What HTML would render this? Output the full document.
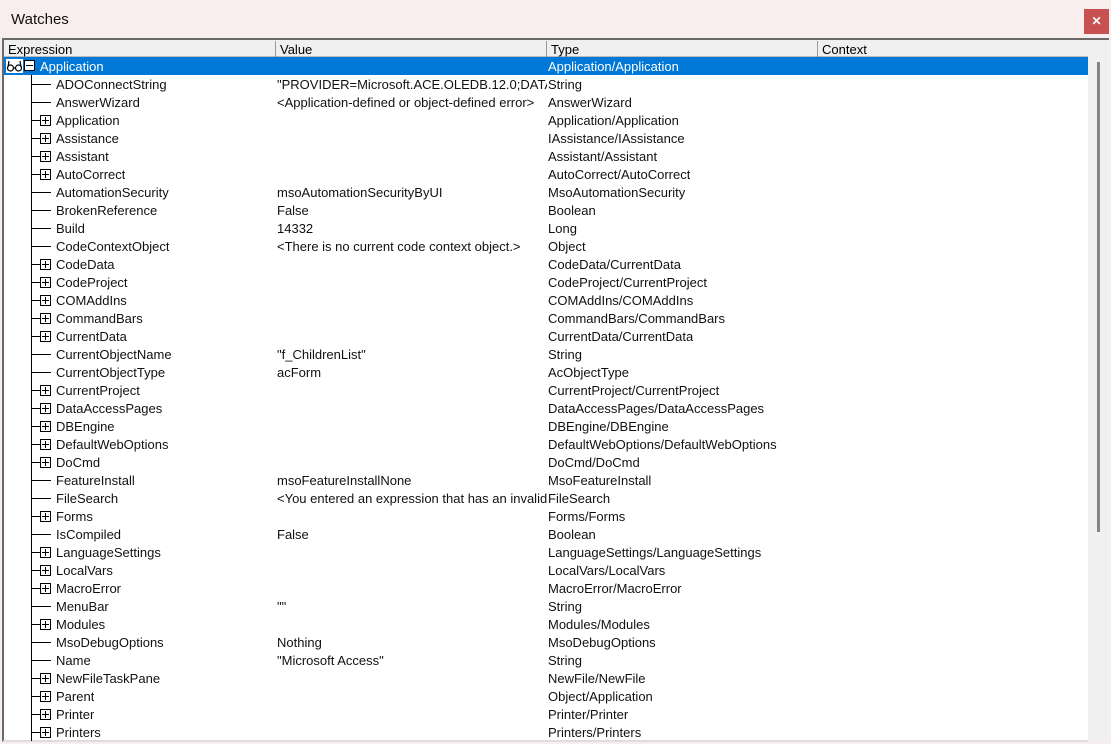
<!DOCTYPE html>
<html><head><style>
*{margin:0;padding:0;box-sizing:border-box}
body{width:1111px;height:744px;overflow:hidden;background:#f9eeee;font-family:"Liberation Sans",sans-serif;font-size:13px;position:relative}
.title{position:absolute;left:11px;top:11px;font-size:15px;color:#111}
.close{position:absolute;left:1084px;top:9px;width:25px;height:25px;background:#c75050;color:#fff;font-size:12px;text-align:center;line-height:25px;font-weight:bold}
.win{position:absolute;left:2px;top:38px;width:1107px;height:704px;background:#fff;border-left:2px solid #6a6a6a;border-top:2px solid #6a6a6a;border-bottom:2px solid #ddd}
.hdr{position:absolute;left:0;top:0;width:1084px;height:17px;background:#f0f0f0;border-bottom:1px solid #bbb}
.hdr div{position:absolute;top:1px;padding-left:4px;border-left:1px solid #999;height:16px;line-height:17px;color:#000}
.sb{position:absolute;left:1084px;top:0;width:21px;height:702px;background:#f0f0f0}
.thumb{position:absolute;left:9px;top:22px;width:3px;height:470px;background:#858585}
.rows{position:absolute;left:0;top:17px;width:1084px}
.r{position:relative;height:18px;line-height:19px;white-space:nowrap;color:#111}
.r span{position:absolute;top:0;overflow:hidden}
.n{left:52px}.v{left:273px;width:270px}.t{left:544px}
.vl{position:absolute;left:27px;top:0;width:1px;height:18px;background:#000}
.hl{position:absolute;left:27px;top:9px;width:20px;height:1px;background:#000}
.hl2{position:absolute;left:27px;top:9px;width:9px;height:1px;background:#000}
.box{position:absolute;left:36px;top:4px;width:11px;height:11px;border:1px solid #000;background:#fff}
.box:before{content:"";position:absolute;left:1px;top:4px;width:7px;height:1px;background:#000}
.box:after{content:"";position:absolute;left:4px;top:1px;width:1px;height:7px;background:#000}
.sel{background:#0078d7;color:#fff}
</style></head><body>
<div class="title">Watches</div>
<div class="close">✕</div>
<div class="win">
<div class="hdr"><div style="left:0;border-left:none">Expression</div><div style="left:271px">Value</div><div style="left:542px">Type</div><div style="left:813px">Context</div></div>
<div class="sb"><div class="thumb"></div></div>
<div class="rows">
<div class="r sel"><span style="left:2px;top:2px;width:17px;height:14px;background:#fff"><svg width="17" height="14" viewBox="0 0 17 14"><g fill="none" stroke="#000" stroke-width="1.2"><circle cx="4.5" cy="9" r="3"/><circle cx="12.5" cy="9" r="3"/><path d="M7.5 9h2M2 8L3 2M15 8L14 2"/></g></svg></span><span style="left:20px;top:3px;width:11px;height:11px;border:1px solid #000;background:#fff"><i style="position:absolute;left:1px;top:4px;width:7px;height:1px;background:#000"></i></span><span style="left:36px;color:#fff">Application</span><span class="t" style="color:#fff">Application/Application</span></div>
<div id="body"></div>
</div></div>
<script>
var d=[["ADOConnectString",0,'"PROVIDER=Microsoft.ACE.OLEDB.12.0;DATA Source','String'],
["AnswerWizard",0,'&lt;Application-defined or object-defined error&gt;','AnswerWizard'],
["Application",1,'','Application/Application'],["Assistance",1,'','IAssistance/IAssistance'],["Assistant",1,'','Assistant/Assistant'],["AutoCorrect",1,'','AutoCorrect/AutoCorrect'],
["AutomationSecurity",0,'msoAutomationSecurityByUI','MsoAutomationSecurity'],["BrokenReference",0,'False','Boolean'],["Build",0,'14332','Long'],
["CodeContextObject",0,'&lt;There is no current code context object.&gt;','Object'],["CodeData",1,'','CodeData/CurrentData'],["CodeProject",1,'','CodeProject/CurrentProject'],
["COMAddIns",1,'','COMAddIns/COMAddIns'],["CommandBars",1,'','CommandBars/CommandBars'],["CurrentData",1,'','CurrentData/CurrentData'],
["CurrentObjectName",0,'"f_ChildrenList"','String'],["CurrentObjectType",0,'acForm','AcObjectType'],["CurrentProject",1,'','CurrentProject/CurrentProject'],
["DataAccessPages",1,'','DataAccessPages/DataAccessPages'],["DBEngine",1,'','DBEngine/DBEngine'],["DefaultWebOptions",1,'','DefaultWebOptions/DefaultWebOptions'],
["DoCmd",1,'','DoCmd/DoCmd'],["FeatureInstall",0,'msoFeatureInstallNone','MsoFeatureInstall'],["FileSearch",0,'&lt;You entered an expression that has an invalid reference','FileSearch'],
["Forms",1,'','Forms/Forms'],["IsCompiled",0,'False','Boolean'],["LanguageSettings",1,'','LanguageSettings/LanguageSettings'],["LocalVars",1,'','LocalVars/LocalVars'],
["MacroError",1,'','MacroError/MacroError'],["MenuBar",0,'""','String'],["Modules",1,'','Modules/Modules'],["MsoDebugOptions",0,'Nothing','MsoDebugOptions'],
["Name",0,'"Microsoft Access"','String'],["NewFileTaskPane",1,'','NewFile/NewFile'],["Parent",1,'','Object/Application'],["Printer",1,'','Printer/Printer'],["Printers",1,'','Printers/Printers']];
var h='';d.forEach(function(x){h+='<div class="r"><i class="vl"></i>'+(x[1]?'<i class="hl2"></i><i class="box"></i>':'<i class="hl"></i>')+'<span class="n">'+x[0]+'</span><span class="v">'+x[2]+'</span><span class="t">'+x[3]+'</span></div>';});
document.getElementById('body').outerHTML=h;
</script>
</body></html>
